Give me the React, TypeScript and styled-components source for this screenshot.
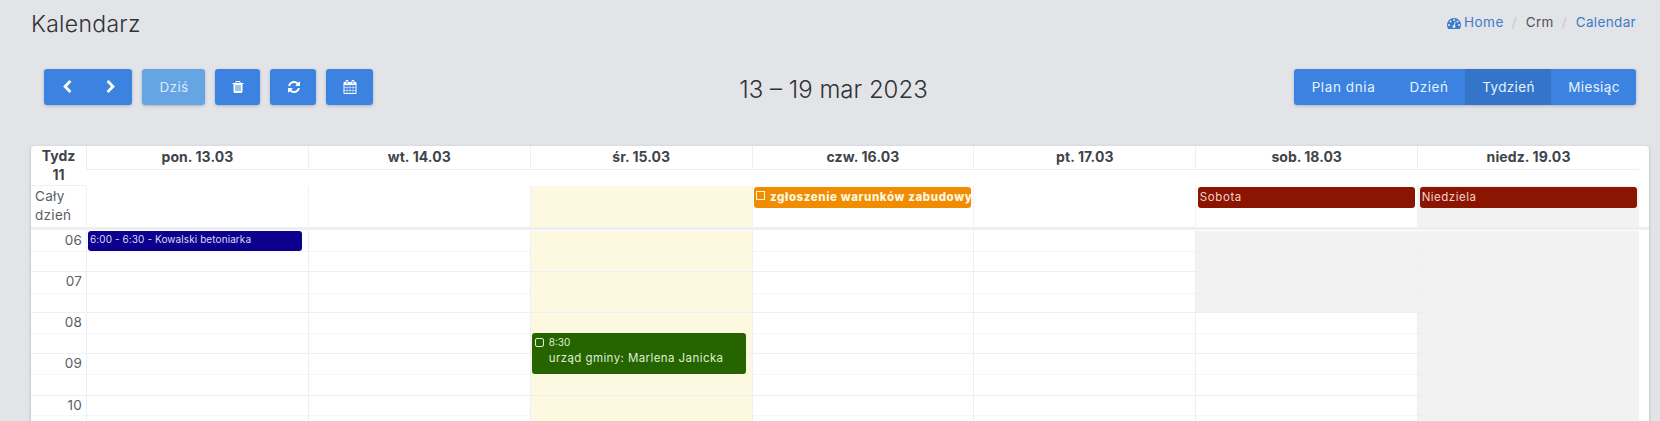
import React from "react";
import styled, { createGlobalStyle, css } from "styled-components";

const GlobalStyle = createGlobalStyle`
  * { box-sizing: border-box; }
  body {
    margin: 0;
    background: #e3e4e8;
    font-family: Inter, "Open Sans", sans-serif;
    font-size: 13.5px;
    color: #43474d;
    overflow: hidden;
  }
`;

const Page = styled.div`
  height: 421px;
  overflow: hidden;
  display: flex;
  flex-direction: column;
`;

const PageHeader = styled.header`
  flex: none;
  display: flex;
  justify-content: space-between;
  align-items: flex-start;
  height: 69px;
  padding: 10px 24px 0 31px;
`;

const PageTitle = styled.h1`
  margin: 0;
  font-size: 23px;
  line-height: 29px;
  font-weight: 300;
  letter-spacing: 0.3px;
  color: #2f3237;
`;

const Breadcrumb = styled.nav`
  display: flex;
  align-items: center;
  height: 25px;
  line-height: 25px;
`;

const Crumb = styled.span<{ $link?: boolean; $spacing?: number }>`
  display: flex;
  align-items: center;
  gap: 3px;
  letter-spacing: ${(p) => p.$spacing ?? 0}px;
  color: ${(p) => (p.$link ? "#3a7ccb" : "#50545a")};
`;

const Slash = styled.span`
  width: 22px;
  padding-left: 8px;
  color: #bfc2c7;
  font-weight: 300;
`;

const Toolbar = styled.div`
  flex: none;
  display: grid;
  grid-template-columns: 1fr auto 1fr;
  height: 77px;
  padding: 0 24px 0 44px;
  align-items: start;
`;

const ToolbarLeft = styled.div`
  display: flex;
  gap: 10px;
`;

const ButtonGroup = styled.div<{ $end?: boolean }>`
  display: flex;
  justify-self: ${(p) => (p.$end ? "end" : "start")};
  border-radius: 3px;
  overflow: hidden;
  box-shadow: 0 1px 3px rgba(40, 60, 90, 0.3);
`;

const Button = styled.button<{ $width: number; $active?: boolean; $muted?: boolean; $spacing?: number }>`
  display: flex;
  align-items: center;
  justify-content: center;
  width: ${(p) => p.$width}px;
  height: 36px;
  padding: 0 0 0 1px;
  border: 0;
  font: inherit;
  line-height: 36px;
  letter-spacing: ${(p) => p.$spacing ?? 0}px;
  color: ${(p) => (p.$muted ? "#d9ebfa" : "#e6f2ff")};
  background: ${(p) => (p.$active ? "#3475ca" : p.$muted ? "#65a5e3" : "#3c83e1")};

  svg {
    color: #fff;
  }
`;

const RangeTitle = styled.h2`
  margin: 0 13px 0 0;
  padding-top: 4px;
  font-size: 24px;
  line-height: 34px;
  font-weight: 300;
  letter-spacing: 0;
  color: #2f3237;
`;

const Card = styled.main`
  flex: none;
  width: 1618px;
  margin-left: 31px;
  height: 300px;
  background: #fff;
  border-radius: 4px;
  box-shadow: 0 1px 3px rgba(60, 70, 90, 0.35);
  overflow: hidden;
`;

const Row = styled.div<{ $height: number }>`
  display: grid;
  grid-template-columns: 55px 1553px;
  height: ${(p) => p.$height}px;
`;

const Days = styled.div`
  display: grid;
  grid-template-columns: repeat(7, 1fr);
  align-items: start;
`;

const WeekNumber = styled.div`
  height: 40px;
  border-bottom: 1px solid #eeeff3;
  text-align: center;
  font-weight: 700;
  font-size: 14px;
  line-height: 19px;
  color: #3f444b;
`;

const DayHeading = styled.div<{ $spacing: number }>`
  height: 24px;
  border-left: 1px solid #eeeff3;
  border-bottom: 1px solid #eeeff3;
  text-align: center;
  font-weight: 700;
  font-size: 14px;
  line-height: 22px;
  letter-spacing: ${(p) => p.$spacing}px;
  color: #3f444b;
`;

const AllDayLabel = styled.div`
  padding: 1px 4px 0;
  line-height: 19px;
  letter-spacing: 0.3px;
  color: #5a5e64;
`;

const tints = { today: "#fdf9e0", closed: "#f2f2f2", open: "transparent" };
type Tint = keyof typeof tints;

const AllDayCell = styled.div<{ $tint: Tint }>`
  height: 41px;
  padding: 1px 0 0 1.5px;
  border-left: 1px solid #f1f2f5;
  background: ${(p) => tints[p.$tint]};
`;

const Divider = styled.div`
  height: 3px;
  margin-bottom: 1px;
  background: #eeeff2;
`;

const Column = styled.div<{ $axis?: boolean }>`
  position: relative;
  border-left: ${(p) => (p.$axis ? "0" : "1px solid #eeeff3")};
`;

const Hour = styled.div<{ $height: number; $first?: boolean; $tint?: Tint }>`
  height: ${(p) => p.$height}px;
  border-top: ${(p) => (p.$first ? "0" : "1px solid #eeeff2")};
  background: ${(p) => tints[p.$tint ?? "open"]};
`;

const HalfHour = styled.div<{ $height: number; $tint?: Tint }>`
  height: ${(p) => p.$height}px;
  border-bottom: 1px ${(p) => (p.$tint && p.$tint !== "open" ? "solid" : "dotted")}
    ${(p) => (p.$tint === "today" ? "#fcf8df" : p.$tint === "closed" ? "#efefef" : "#eceef1")};
  padding-right: 4px;
  text-align: right;
  line-height: 19px;
  letter-spacing: 0.2px;
  color: #5a5e64;
`;

const eventBase = css<{ $color: string }>`
  background: ${(p) => p.$color};
  border-radius: 3px;
  overflow: hidden;
  white-space: nowrap;
  font-size: 11.5px;
`;

const AllDayEvent = styled.div<{ $color: string; $bold?: boolean; $spacing: number }>`
  ${eventBase}
  display: flex;
  align-items: center;
  width: 217px;
  height: 21px;
  padding: 0 2px 1px;
  color: ${(p) => (p.$bold ? "#fff6e0" : "#f4d3cd")};
  font-weight: ${(p) => (p.$bold ? 800 : 400)};
  letter-spacing: ${(p) => p.$spacing}px;
`;

const TimedEvent = styled.div<{ $color: string; $top: number; $height: number }>`
  ${eventBase}
  position: absolute;
  left: 1px;
  top: ${(p) => p.$top}px;
  width: 214px;
  height: ${(p) => p.$height}px;
  padding: 0 3px;
  display: flex;
  color: #dcefd2;
`;

const ShortText = styled.div`
  margin-left: -1px;
  font-size: 10px;
  line-height: 17px;
  letter-spacing: 0.09px;
  color: #dcd9f5;
`;

const EventBody = styled.div`
  padding: 1px 0 0 5px;
`;

const EventTime = styled.div`
  font-size: 10px;
  line-height: 16px;
`;

const EventName = styled.div`
  line-height: 17px;
  letter-spacing: 0.42px;
`;

const CheckBox = styled.span<{ $round?: boolean }>`
  flex: none;
  width: 9px;
  height: 9px;
  border: 1px solid currentColor;
  border-radius: ${(p) => (p.$round ? 2 : 0)}px;
  margin: ${(p) => (p.$round ? "5px 0 0 0" : "0 5px 3px 0")};
`;

const icons = {
  left: "M1427 301l-531 531 531 531q19 19 19 45t-19 45l-166 166q-19 19-45 19t-45-19l-742-742q-19-19-19-45t19-45l742-742q19-19 45-19t45 19l166 166q19 19 19 45t-19 45z",
  right: "M1363 877l-742 742q-19 19-45 19t-45-19l-166-166q-19-19-19-45t19-45l531-531-531-531q-19-19-19-45t19-45l166-166q19-19 45-19t45 19l742 742q19 19 19 45t-19 45z",
  trash: "M704 1376v-704q0-14-9-23t-23-9h-64q-14 0-23 9t-9 23v704q0 14 9 23t23 9h64q14 0 23-9t9-23zm256 0v-704q0-14-9-23t-23-9h-64q-14 0-23 9t-9 23v704q0 14 9 23t23 9h64q14 0 23-9t9-23zm256 0v-704q0-14-9-23t-23-9h-64q-14 0-23 9t-9 23v704q0 14 9 23t23 9h64q14 0 23-9t9-23zm-544-992h448l-48-117q-7-9-17-11h-317q-10 2-17 11zm928 32v64q0 14-9 23t-23 9h-96v948q0 83-47 143.5t-113 60.5h-832q-66 0-113-58.5t-47-141.5v-952h-96q-14 0-23-9t-9-23v-64q0-14 9-23t23-9h309l70-167q15-37 54-63t79-26h320q40 0 79 26t54 63l70 167h309q14 0 23 9t9 23z",
  refresh: "M1639 1056q0 5-1 7-64 268-268 434.5t-478 166.5q-146 0-282.5-55t-243.5-157l-129 129q-19 19-45 19t-45-19-19-45v-448q0-26 19-45t45-19h448q26 0 45 19t19 45-19 45l-137 137q71 66 161 102t187 36q134 0 250-65t186-179q11-17 53-117 8-23 30-23h192q13 0 22.5 9.5t9.5 22.5zm25-800v448q0 26-19 45t-45 19h-448q-26 0-45-19t-19-45 19-45l138-138q-148-137-349-137-134 0-250 65t-186 179q-11 17-53 117-8 23-30 23h-199q-13 0-22.5-9.5t-9.5-22.5v-7q65-268 270-434.5t480-166.5q146 0 284 55.5t245 156.5l130-129q19-19 45-19t45 19 19 45z",
  calendar: "M192 1664h288v-288h-288v288zm352 0h320v-288h-320v288zm-352-352h288v-320h-288v320zm352 0h320v-320h-320v320zm-352-384h288v-288h-288v288zm736 736h320v-288h-320v288zm-384-736h320v-288h-320v288zm768 736h288v-288h-288v288zm-384-352h320v-320h-320v320zm-352-864v-288q0-13-9.5-22.5t-22.5-9.5h-64q-13 0-22.5 9.5t-9.5 22.5v288q0 13 9.5 22.5t22.5 9.5h64q13 0 22.5-9.5t9.5-22.5zm736 864h288v-320h-288v320zm-384-384h320v-288h-320v288zm384 0h288v-288h-288v288zm32-480v-288q0-13-9.5-22.5t-22.5-9.5h-64q-13 0-22.5 9.5t-9.5 22.5v288q0 13 9.5 22.5t22.5 9.5h64q13 0 22.5-9.5t9.5-22.5zm384-64v1280q0 52-38 90t-90 38h-1408q-52 0-90-38t-38-90v-1280q0-52 38-90t90-38h128v-96q0-66 47-113t113-47h64q66 0 113 47t47 113v96h384v-96q0-66 47-113t113-47h64q66 0 113 47t47 113v96h128q52 0 90 38t38 90z",
  gauge: "M384 1152q0-53-37.5-90.5t-90.5-37.5-90.5 37.5-37.5 90.5 37.5 90.5 90.5 37.5 90.5-37.5 37.5-90.5zm192-448q0-53-37.5-90.5t-90.5-37.5-90.5 37.5-37.5 90.5 37.5 90.5 90.5 37.5 90.5-37.5 37.5-90.5zm428 481l101-382q6-26-7.5-48.5t-38.5-29.5-48 6.5-30 39.5l-101 382q-60 5-107 43.5t-63 98.5q-20 77 20 146t117 89 146-20 89-117q16-60-6-117t-72-91zm660-33q0-53-37.5-90.5t-90.5-37.5-90.5 37.5-37.5 90.5 37.5 90.5 90.5 37.5 90.5-37.5 37.5-90.5zm-640-640q0-53-37.5-90.5t-90.5-37.5-90.5 37.5-37.5 90.5 37.5 90.5 90.5 37.5 90.5-37.5 37.5-90.5zm448 192q0-53-37.5-90.5t-90.5-37.5-90.5 37.5-37.5 90.5 37.5 90.5 90.5 37.5 90.5-37.5 37.5-90.5zm320 448q0 261-141 483-19 29-54 29h-1402q-35 0-54-29-141-221-141-483 0-182 71-348t191-286 286-191 348-71 348 71 286 191 191 286 71 348z",
};

function Icon({ name, size = 14 }: { name: keyof typeof icons; size?: number }) {
  return (
    <svg width={size} height={size} viewBox="0 0 1792 1792" fill="currentColor" aria-hidden>
      <path d={icons[name]} />
    </svg>
  );
}

const hours = [
  { label: "06", height: 40, half: 21 },
  { label: "07", height: 41, half: 22 },
  { label: "08", height: 41, half: 21 },
  { label: "09", height: 42, half: 21 },
  { label: "10", height: 41, half: 20 },
];

interface Day {
  name: string;
  spacing: number;
  allDay: Tint;
  tint: (hour: number) => Tint;
  banner?: React.ReactNode;
  event?: React.ReactNode;
}

const open = (): Tint => "open";

const days: Day[] = [
  {
    name: "pon. 13.03",
    spacing: 0.05,
    allDay: "open",
    tint: open,
    event: (
      <TimedEvent $color="#0d008c" $top={0} $height={20}>
        <ShortText>6:00 - 6:30 - Kowalski betoniarka</ShortText>
      </TimedEvent>
    ),
  },
  { name: "wt. 14.03", spacing: 0.1, allDay: "open", tint: open },
  {
    name: "śr. 15.03",
    spacing: 0,
    allDay: "today",
    tint: () => "today",
    event: (
      <TimedEvent $color="#266400" $top={102} $height={41}>
        <CheckBox $round />
        <EventBody>
          <EventTime>8:30</EventTime>
          <EventName>urząd gminy: Marlena Janicka</EventName>
        </EventBody>
      </TimedEvent>
    ),
  },
  {
    name: "czw. 16.03",
    spacing: 0.1,
    allDay: "open",
    tint: open,
    banner: (
      <AllDayEvent $color="#f08c00" $bold $spacing={0.6}>
        <CheckBox />
        zgłoszenie warunków zabudowy
      </AllDayEvent>
    ),
  },
  { name: "pt. 17.03", spacing: 0.1, allDay: "open", tint: open },
  {
    name: "sob. 18.03",
    spacing: 0,
    allDay: "open",
    tint: (hour) => (hour < 2 ? "closed" : "open"),
    banner: <AllDayEvent $color="#8a1500" $spacing={0.6}>Sobota</AllDayEvent>,
  },
  {
    name: "niedz. 19.03",
    spacing: 0.1,
    allDay: "closed",
    tint: () => "closed",
    banner: <AllDayEvent $color="#8a1500" $spacing={0.5}>Niedziela</AllDayEvent>,
  },
];

export default function App() {
  return (
    <Page>
      <GlobalStyle />
      <PageHeader>
        <PageTitle>Kalendarz</PageTitle>
        <Breadcrumb>
          <Crumb $link $spacing={0.5}>
            <Icon name="gauge" />
            Home
          </Crumb>
          <Slash>/</Slash>
          <Crumb $spacing={0.3}>Crm</Crumb>
          <Slash>/</Slash>
          <Crumb $link $spacing={0.35}>Calendar</Crumb>
        </Breadcrumb>
      </PageHeader>
      <Toolbar>
        <ToolbarLeft>
          <ButtonGroup>
            <Button $width={45}><Icon name="left" /></Button>
            <Button $width={43}><Icon name="right" /></Button>
          </ButtonGroup>
          <ButtonGroup><Button $width={63} $muted $spacing={0.4}>Dziś</Button></ButtonGroup>
          <ButtonGroup><Button $width={45}><Icon name="trash" /></Button></ButtonGroup>
          <ButtonGroup><Button $width={46}><Icon name="refresh" /></Button></ButtonGroup>
          <ButtonGroup><Button $width={47}><Icon name="calendar" /></Button></ButtonGroup>
        </ToolbarLeft>
        <RangeTitle>13 – 19 mar 2023</RangeTitle>
        <ButtonGroup $end>
          <Button $width={98} $spacing={0.6}>Plan dnia</Button>
          <Button $width={73} $spacing={0.5}>Dzień</Button>
          <Button $width={86} $active $spacing={0.35}>Tydzień</Button>
          <Button $width={85} $spacing={0.35}>Miesiąc</Button>
        </ButtonGroup>
      </Toolbar>
      <Card>
        <Row $height={40}>
          <WeekNumber>
            Tydz
            <br />
            11
          </WeekNumber>
          <Days>
            {days.map((d) => (
              <DayHeading key={d.name} $spacing={d.spacing}>{d.name}</DayHeading>
            ))}
          </Days>
        </Row>
        <Row $height={41}>
          <AllDayLabel>Cały dzień</AllDayLabel>
          <Days>
            {days.map((d) => (
              <AllDayCell key={d.name} $tint={d.allDay}>{d.banner}</AllDayCell>
            ))}
          </Days>
        </Row>
        <Divider />
        <Row $height={205}>
          <Column $axis>
            {hours.map((h, i) => (
              <Hour key={h.label} $height={h.height} $first={i === 0}>
                <HalfHour $height={h.half}>{h.label}</HalfHour>
              </Hour>
            ))}
          </Column>
          <Days>
            {days.map((d) => (
              <Column key={d.name}>
                {hours.map((h, i) => (
                  <Hour key={h.label} $height={h.height} $first={i === 0} $tint={d.tint(i)}>
                    <HalfHour $height={h.half} $tint={d.tint(i)} />
                  </Hour>
                ))}
                {d.event}
              </Column>
            ))}
          </Days>
        </Row>
      </Card>
    </Page>
  );
}
